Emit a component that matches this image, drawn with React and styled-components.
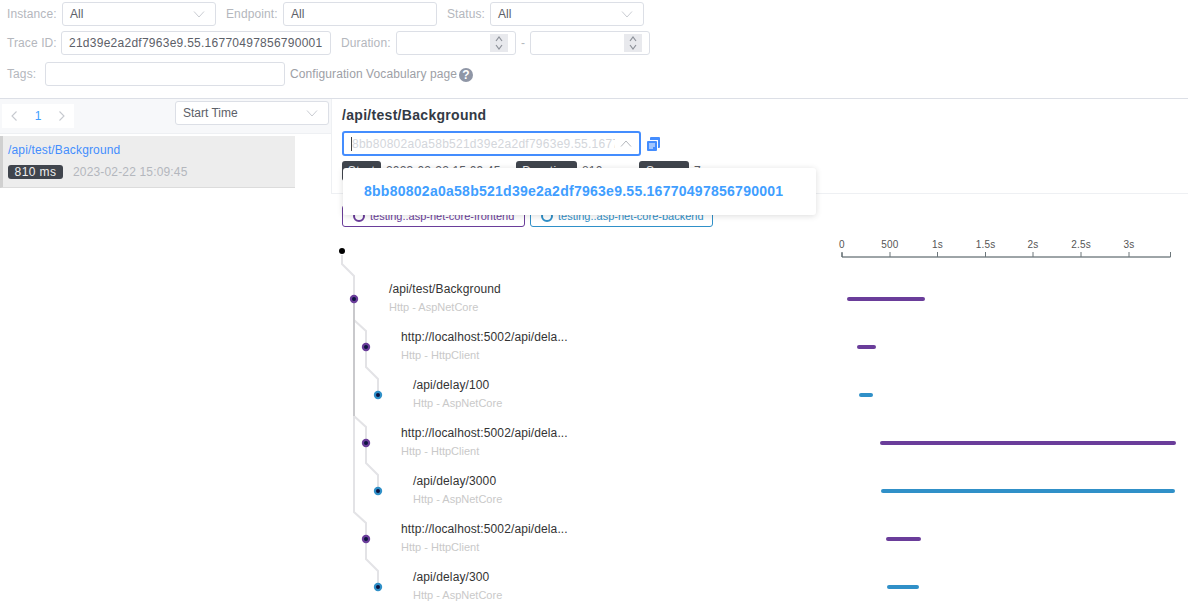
import React from "react";
import styled, { createGlobalStyle } from "styled-components";

const GlobalStyle = createGlobalStyle`
  html, body {
    margin: 0;
    background: #fff;
    font-family: "Liberation Sans", Arial, sans-serif;
    color: #3d444f;
  }
  * { box-sizing: border-box; }
`;

const Page = styled.div`
  width: 1188px;
  height: 616px;
  overflow: hidden;
  display: flex;
  flex-direction: column;
`;

const Filters = styled.div`
  height: 99px;
  padding: 2px 0 0 7px;
  border-bottom: 1px solid #dcdfe6;
  display: flex;
  flex-direction: column;
`;

const FilterRow = styled.div`
  height: ${(p) => p.$h}px;
  display: flex;
  align-items: flex-start;
  font-size: 12px;
`;

const Label = styled.span`
  width: ${(p) => p.$w}px;
  margin-left: ${(p) => p.$ml || 0}px;
  line-height: 24px;
  letter-spacing: 0.1px;
  color: #b4b7bd;
  white-space: nowrap;
  flex: none;
`;

const Box = styled.div`
  width: ${(p) => p.$w}px;
  height: 24px;
  flex: none;
  padding: 0 ${(p) => p.$pad ?? 7}px;
  border: 1px solid #dcdfe6;
  border-radius: 3px;
  background: #fff;
  display: flex;
  align-items: center;
  justify-content: space-between;
  font-size: 12px;
  letter-spacing: ${(p) => p.$spacing || 0}px;
  color: #5c6068;
  white-space: nowrap;
`;

const ChevronIcon = styled.svg`
  margin-right: 3px;
`;

const Chevron = ({ up, color = "#c9ccd2" }) => (
  <ChevronIcon width="12" height="7" viewBox="0 0 12 7" fill="none" stroke={color} strokeWidth="1">
    <path d={up ? "M1 6.5l5-5.5 5 5.5" : "M1 .5l5 5.5 5-5.5"} />
  </ChevronIcon>
);

const Stepper = styled.span`
  width: 18px;
  height: 18px;
  background: #e8e9ed;
  display: flex;
  align-items: center;
  justify-content: center;
`;

const StepperIcon = () => (
  <svg width="10" height="16" viewBox="0 0 10 16" fill="none" stroke="#8d9199" strokeWidth="1.2">
    <path d="M2 6l3-4 3 4M2 10l3 4 3-4" />
  </svg>
);

const Dash = styled.span`
  width: 14px;
  line-height: 24px;
  text-align: center;
  color: #b4b7bd;
  flex: none;
`;

const HelpText = styled.span`
  margin-left: 5px;
  line-height: 24px;
  letter-spacing: 0.1px;
  color: #9da0a6;
  white-space: nowrap;
`;

const HelpIcon = styled.span`
  width: 14px;
  height: 14px;
  margin: 6px 0 0 2px;
  border-radius: 50%;
  background: #8f96a6;
  color: #fff;
  font-size: 12px;
  font-weight: 700;
  line-height: 14px;
  text-align: center;
`;

const Body = styled.div`
  flex: 1;
  display: flex;
  min-height: 0;
`;

const Sidebar = styled.aside`
  width: 331px;
  flex: none;
  display: flex;
  flex-direction: column;
`;

const SideHead = styled.div`
  height: 35px;
  padding: 2px 2px 0 2px;
  background: #f7f8fa;
  border-bottom: 1px solid #eef0f3;
  display: flex;
  justify-content: space-between;
  align-items: flex-start;
`;

const Pager = styled.div`
  width: 72px;
  height: 24px;
  margin-top: 3px;
  padding: 0 9px;
  background: #fff;
  display: flex;
  align-items: center;
  justify-content: space-between;
  font-size: 12px;
  color: #409eff;
`;

const TraceItem = styled.div`
  width: 295px;
  height: 52px;
  margin-top: 2px;
  padding: 6px 0 0 5px;
  background: #ededed;
  border-left: 3px solid #d0d0d0;
  border-bottom: 1px solid #dcdcdc;
`;

const TraceLink = styled.div`
  font-size: 12px;
  line-height: 16px;
  letter-spacing: 0.15px;
  color: #448dfe;
`;

const TraceMeta = styled.div`
  margin-top: 7px;
  display: flex;
  align-items: center;
  font-size: 12px;
  letter-spacing: 0.16px;
  color: #b4b7bd;
`;

const Badge = styled.span`
  width: ${(p) => p.$w}px;
  height: ${(p) => p.$h || 14}px;
  margin-right: ${(p) => p.$mr || 5}px;
  border-radius: 3px;
  background: #40454d;
  color: #eee;
  font-size: 12px;
  line-height: ${(p) => p.$h || 14}px;
  letter-spacing: 0.4px;
  text-align: center;
  flex: none;
`;

const Main = styled.main`
  flex: 1;
  min-width: 0;
  position: relative;
`;

const Header = styled.div`
  height: 95px;
  padding: 8px 0 0 10px;
  border-left: 1px solid #eef0f3;
  border-bottom: 1px solid #eef0f3;
`;

const Title = styled.h3`
  margin: 0;
  font-size: 14px;
  line-height: 17px;
  font-weight: 700;
  letter-spacing: 0.3px;
  color: #333a45;
`;

const TraceSelect = styled.div`
  margin-top: 7px;
  display: flex;
  align-items: center;
`;

const SelectField = styled.div`
  width: 299px;
  height: 25px;
  padding: 0 4px 0 7px;
  border: 2px solid #448dfe;
  border-radius: 3px;
  display: flex;
  align-items: center;
  justify-content: space-between;
`;

const Placeholder = styled.span`
  width: 264px;
  overflow: hidden;
  border-left: 1px solid #444;
  font-size: 12px;
  line-height: 14px;
  letter-spacing: 0.26px;
  color: #d3d6db;
  white-space: nowrap;
`;

const CopyIcon = styled.svg`
  margin-left: 6px;
`;

const Info = styled.div`
  margin-top: 5px;
  display: flex;
  font-size: 12px;
  line-height: 20px;
  letter-spacing: 0.16px;
  color: #5c6068;
`;

const InfoValue = styled.span`
  width: ${(p) => p.$w}px;
  flex: none;
`;

const Dropdown = styled.div`
  position: absolute;
  left: 12px;
  top: 69px;
  z-index: 2;
  width: 473px;
  height: 47px;
  padding: 0 21px;
  border-radius: 3px;
  background: #fff;
  box-shadow: 0 1px 6px rgba(0, 0, 0, 0.14);
  font-size: 14px;
  font-weight: 700;
  letter-spacing: 0.26px;
  line-height: 47px;
  color: #409eff;
`;

const Legend = styled.div`
  margin-top: 11px;
  padding-left: 11px;
  display: flex;
  gap: 5px;
`;

const LegendItem = styled.div`
  width: ${(p) => p.$w}px;
  height: 22px;
  padding-left: 10px;
  border: 1px solid ${(p) => p.$color};
  border-radius: 3px;
  display: flex;
  align-items: center;
  gap: 5px;
  font-size: 11px;
  color: ${(p) => p.$color};
  white-space: nowrap;
`;

const Ring = styled.span`
  width: 12px;
  height: 12px;
  flex: none;
  border: 2px solid ${(p) => p.$color};
  border-radius: 50%;
`;

const Chart = styled.svg`
  display: block;
  margin-top: 12px;
  font-family: "Liberation Sans", Arial, sans-serif;
`;

// chart's viewBox uses page coordinates, it starts at page 331, 239
const PURPLE = "#6a3d9a";
const BLUE = "#3090c8";
const ox = 331;
const oy = 239;

const spans = [
  { label: "/api/test/Background", sub: "Http - AspNetCore", lvl: 0, from: 849, to: 923, color: PURPLE },
  { label: "http://localhost:5002/api/dela...", sub: "Http - HttpClient", lvl: 1, from: 859, to: 874, color: PURPLE },
  { label: "/api/delay/100", sub: "Http - AspNetCore", lvl: 2, from: 861, to: 871, color: BLUE },
  { label: "http://localhost:5002/api/dela...", sub: "Http - HttpClient", lvl: 1, from: 882, to: 1174, color: PURPLE },
  { label: "/api/delay/3000", sub: "Http - AspNetCore", lvl: 2, from: 883, to: 1173, color: BLUE },
  { label: "http://localhost:5002/api/dela...", sub: "Http - HttpClient", lvl: 1, from: 888, to: 919, color: PURPLE },
  { label: "/api/delay/300", sub: "Http - AspNetCore", lvl: 2, from: 889, to: 917, color: BLUE },
];

const ticks = [
  { x: 842, t: "0" },
  { x: 890, t: "500" },
  { x: 937.5, t: "1s" },
  { x: 985.5, t: "1.5s" },
  { x: 1033, t: "2s" },
  { x: 1081, t: "2.5s" },
  { x: 1129, t: "3s" },
  { x: 1170.5, t: "" },
];

const links = [
  { d: "M342 255V264L354 276V295", c: "#e3e3e6" },
  { d: "M354 303V320L366 331V343", c: "#e3e3e6" },
  { d: "M366 351V367L378 379V391", c: "#e3e3e6" },
  { d: "M354 303V416L366 427V439", c: "#e3e3e6" },
  { d: "M366 447V463L378 475V487", c: "#e3e3e6" },
  { d: "M354 303V512L366 523V535", c: "#e3e3e6" },
  { d: "M366 543V559L378 571V583", c: "#e3e3e6" },
  { d: "M354 303V416", c: "#c9c9cc" },
];

const TraceChart = () => (
  <Chart width="857" height="377" viewBox={`${ox} ${oy} 857 377`}>
    {links.map((l, i) => (
      <path key={i} d={l.d} fill="none" stroke={l.c} strokeWidth="2" />
    ))}
    <circle cx="342" cy="251" r="3" fill="#000" />
    <path d="M842 252.5V257H1170.5V252.5" fill="none" stroke="#3c4a50" />
    {ticks.map((t) => (
      <g key={t.x}>
        <line x1={t.x} x2={t.x} y1="252" y2="257" stroke="#6d777b" />
        <text x={t.x} y="248" textAnchor="middle" fontSize="10" letterSpacing="0.2" fill="#555">
          {t.t}
        </text>
      </g>
    ))}
    {spans.map((s, i) => {
      const y = 299 + i * 48;
      const cx = 354 + s.lvl * 12;
      return (
        <g key={i}>
          <circle cx={cx} cy={y} r="4.2" fill={s.color} />
          <circle cx={cx} cy={y} r="2" fill="#0c1440" />
          <text x={cx + 35} y={y - 6} fontSize="12" letterSpacing="0.12" fill="#333">
            {s.label}
          </text>
          <text x={cx + 35} y={y + 12} fontSize="11" fill="#c9c9c9">
            {s.sub}
          </text>
          <line x1={s.from} x2={s.to} y1={y} y2={y} stroke={s.color} strokeWidth="4" strokeLinecap="round" />
        </g>
      );
    })}
  </Chart>
);

function PagerArrow({ dir }) {
  return (
    <svg width="6" height="10" viewBox="0 0 6 10" fill="none" stroke="#c6c9cf" strokeWidth="1.1">
      <path d={dir === "left" ? "M5.5 .5L1 5l4.5 4.5" : "M.5 .5L5 5 .5 9.5"} />
    </svg>
  );
}

export default function App() {
  return (
    <Page>
      <GlobalStyle />
      <Filters>
        <FilterRow $h={29}>
          <Label $w={55}>Instance:</Label>
          <Box $w={154}>All<Chevron /></Box>
          <Label $w={57} $ml={10}>Endpoint:</Label>
          <Box $w={154}>All</Box>
          <Label $w={43} $ml={10}>Status:</Label>
          <Box $w={154}>All<Chevron /></Box>
        </FilterRow>
        <FilterRow $h={31}>
          <Label $w={54}>Trace ID:</Label>
          <Box $w={270} $spacing={0.26}>21d39e2a2df7963e9.55.16770497856790001</Box>
          <Label $w={55} $ml={10}>Duration:</Label>
          <Box $w={120}><span /><Stepper><StepperIcon /></Stepper></Box>
          <Dash>-</Dash>
          <Box $w={120}><span /><Stepper><StepperIcon /></Stepper></Box>
        </FilterRow>
        <FilterRow $h={30}>
          <Label $w={38}>Tags:</Label>
          <Box $w={240} />
          <HelpText>Configuration Vocabulary page</HelpText>
          <HelpIcon>?</HelpIcon>
        </FilterRow>
      </Filters>
      <Body>
        <Sidebar>
          <SideHead>
            <Pager>
              <PagerArrow dir="left" />
              1
              <PagerArrow dir="right" />
            </Pager>
            <Box $w={154}>Start Time<Chevron /></Box>
          </SideHead>
          <TraceItem>
            <TraceLink>/api/test/Background</TraceLink>
            <TraceMeta>
              <Badge $w={55} $mr={10}>810 ms</Badge>
              2023-02-22 15:09:45
            </TraceMeta>
          </TraceItem>
        </Sidebar>
        <Main>
          <Header>
            <Title>/api/test/Background</Title>
            <TraceSelect>
              <SelectField>
                <Placeholder>8bb80802a0a58b521d39e2a2df7963e9.55.16770497856790001</Placeholder>
                <Chevron up color="#b4b7bd" />
              </SelectField>
              <CopyIcon width="13" height="14" viewBox="0 0 13 14">
                <path d="M4 0h8a1 1 0 0 1 1 1v9a1 1 0 0 1-1 1h-1V3H3V1a1 1 0 0 1 1-1z" fill="#448dfe" />
                <path d="M1 4h8a1 1 0 0 1 1 1v8a1 1 0 0 1-1 1H1a1 1 0 0 1-1-1V5a1 1 0 0 1 1-1z" fill="#448dfe" />
                <path d="M2 7h6M2 9h6M2 11h4" stroke="#fff" />
              </CopyIcon>
            </TraceSelect>
            <Info>
              <Badge $w={39} $h={20}>Start</Badge>
              <InfoValue $w={130}>2023-02-22 15:09:45</InfoValue>
              <Badge $w={61} $h={20}>Duration</Badge>
              <InfoValue $w={57}>810 ms</InfoValue>
              <Badge $w={50} $h={20}>Spans</Badge>
              <InfoValue $w={20}>7</InfoValue>
            </Info>
          </Header>
          <Dropdown>8bb80802a0a58b521d39e2a2df7963e9.55.16770497856790001</Dropdown>
          <Legend>
            <LegendItem $w={183} $color="#6a3d9a"><Ring $color="#6a3d9a" />testing..asp-net-core-frontend</LegendItem>
            <LegendItem $w={183} $color="#3090c8"><Ring $color="#3090c8" />testing..asp-net-core-backend</LegendItem>
          </Legend>
          <TraceChart />
        </Main>
      </Body>
    </Page>
  );
}
